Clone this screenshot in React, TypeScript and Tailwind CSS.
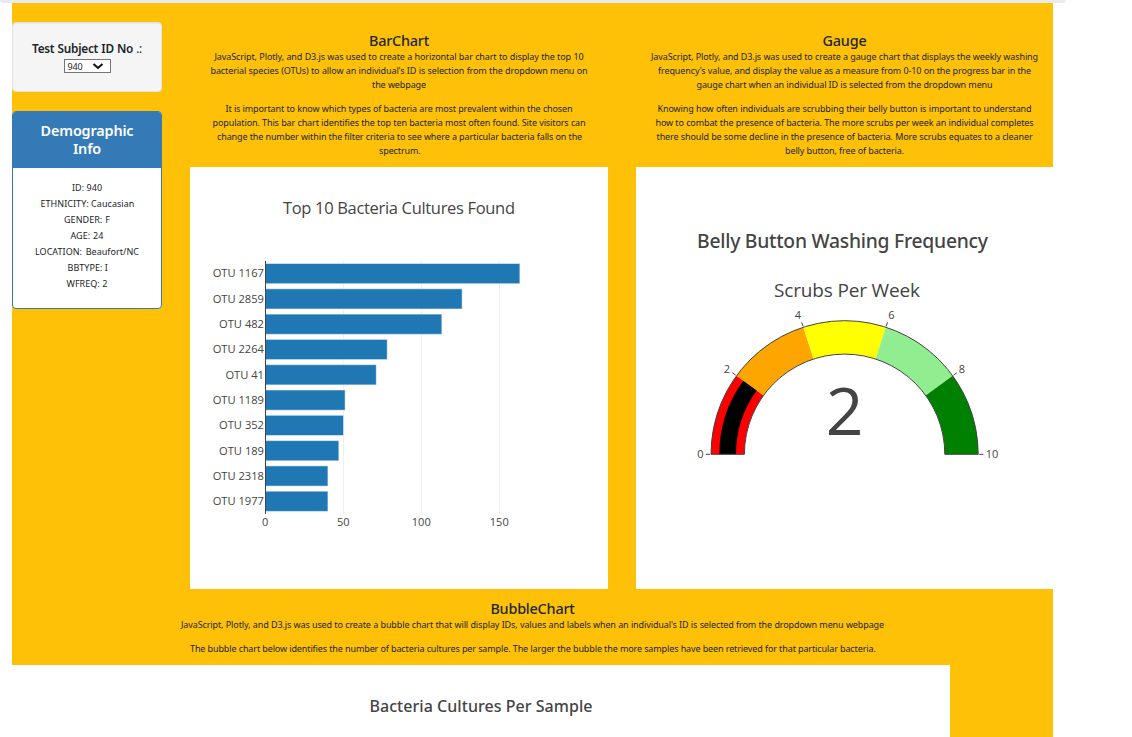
import React from "react";

const samples = [
  { otu: "OTU 1167", value: 163 },
  { otu: "OTU 2859", value: 126 },
  { otu: "OTU 482", value: 113 },
  { otu: "OTU 2264", value: 78 },
  { otu: "OTU 41", value: 71 },
  { otu: "OTU 1189", value: 51 },
  { otu: "OTU 352", value: 50 },
  { otu: "OTU 189", value: 47 },
  { otu: "OTU 2318", value: 40 },
  { otu: "OTU 1977", value: 40 },
];

const demographics = [
  { text: "ID: 940", width: 30 },
  { text: "ETHNICITY: Caucasian", width: 93 },
  { text: "GENDER: F", width: 46 },
  { text: "AGE: 24", width: 33 },
  { text: "LOCATION: Beaufort/NC", width: 104 },
  { text: "BBTYPE: I", width: 39 },
  { text: "WFREQ: 2", width: 41 },
];

type TextLine = { text: string; width: number };

function Lines({ lines }: { lines: TextLine[] }) {
  return (
    <div className="flex flex-col items-center text-[9px] leading-[14px] tracking-[-0.11px]">
      {lines.map((l) => (
        <div key={l.text} className="whitespace-nowrap [text-align-last:justify]" style={{ width: l.width }}>
          {l.text}
        </div>
      ))}
    </div>
  );
}

function Intro({ title, blocks }: { title: string; blocks: TextLine[][] }) {
  return (
    <section className="flex flex-col items-center">
      <h2 className="mb-px text-[14.4px] font-medium leading-[17px] tracking-[-0.2px]">{title}</h2>
      <div className="flex flex-col gap-[10px]">
        {blocks.map((b, i) => (
          <Lines key={i} lines={b} />
        ))}
      </div>
    </section>
  );
}

function BarChart() {
  const x0 = 75.5;
  const scale = 1.5605;
  return (
    <svg width="418" height="422" className="block bg-white font-['Open_Sans','Noto_Sans',sans-serif]" fill="#444">
      <text x="209" y="47" fontSize="16.5" textAnchor="middle" textLength="232">Top 10 Bacteria Cultures Found</text>
      {[50, 100, 150].map((v) => (
        <line key={v} x1={Math.round(x0 + v * scale) - 0.5} x2={Math.round(x0 + v * scale) - 0.5} y1="94" y2="347" stroke="#eee" />
      ))}
      {samples.map((s, i) => (
        <g key={s.otu}>
          <rect x={x0} y={96.5 + i * 25.3} width={s.value * scale} height="20.2" fill="#1f77b4" stroke="#fff" strokeOpacity="0.5" />
          <text x="74" y={110.4 + i * 25.3} fontSize="11.15" textAnchor="end">{s.otu}</text>
        </g>
      ))}
      <line x1={x0} x2={x0} y1="94" y2="347" stroke="#444" />
      {[0, 50, 100, 150].map((v) => (
        <text key={v} x={x0 + v * scale - 0.3} y="359" fontSize="11" textAnchor="middle">{v}</text>
      ))}
    </svg>
  );
}

const CX = 208.6;
const CY = 287.3;

function polar(v: number, r: number) {
  const a = Math.PI * (1 - v / 10);
  return [CX + r * Math.cos(a), CY - r * Math.sin(a)];
}

function ring(from: number, to: number, inner: number, outer: number) {
  const [ax, ay] = polar(from, outer);
  const [bx, by] = polar(to, outer);
  const [cx, cy] = polar(to, inner);
  const [dx, dy] = polar(from, inner);
  return `M${ax},${ay}A${outer},${outer} 0 0 1 ${bx},${by}L${cx},${cy}A${inner},${inner} 0 0 0 ${dx},${dy}Z`;
}

function Gauge() {
  const colors = ["red", "orange", "yellow", "lightgreen", "green"];
  const ticks = [
    { v: 0, x: 64.5, y: 291 },
    { v: 2, x: 91, y: 206 },
    { v: 4, x: 162, y: 152 },
    { v: 6, x: 255.5, y: 152 },
    { v: 8, x: 326, y: 206 },
    { v: 10, x: 356, y: 291 },
  ];
  return (
    <svg width="417" height="422" className="block bg-white font-['Open_Sans','Noto_Sans',sans-serif]" fill="#444">
      <text x="206.5" y="81" className="font-['Noto_Sans',sans-serif]" fontSize="19.3" fontWeight="500" textAnchor="middle" textLength="291">Belly Button Washing Frequency</text>
      <text x="211" y="130" fontSize="19" textAnchor="middle" textLength="146">Scrubs Per Week</text>
      {colors.map((c, i) => (
        <path key={c} d={ring(i * 2, i * 2 + 2, 100.2, 133.6)} fill={c} />
      ))}
      <path d={ring(0, 2, 108.6, 125.3)} fill="#000" />
      <path d={ring(0, 10, 100.2, 133.6)} fill="none" stroke="#444" />
      {ticks.map((t) => {
        const [x1, y1] = polar(t.v, 134.6);
        const [x2, y2] = polar(t.v, 138.8);
        return (
          <g key={t.v}>
            <line x1={x1} y1={y1} x2={x2} y2={y2} stroke="#444" />
            <text x={t.x} y={t.y} fontSize="11" textAnchor="middle">{t.v}</text>
          </g>
        );
      })}
      <text x="208.6" y="268" fontSize="66" textAnchor="middle">2</text>
    </svg>
  );
}

export default function App() {
  return (
    <div className="flex h-[737px] w-[1132px] flex-col overflow-hidden bg-white font-['Noto_Sans','Open_Sans',sans-serif] text-[#212529]">
      <div className="h-[3px] w-[1066px] shrink-0 rounded-b-[4px] bg-[#e9ecef]" />
      <main className="ml-3 flex h-[734px] w-[1041px] flex-col bg-[#ffc107]">
        <div className="flex h-[586px] shrink-0">
          <aside className="w-[150px] shrink-0 pt-[19px]">
            <div className="flex h-[70px] flex-col items-center rounded-[4px] border border-[#e3e3e3] bg-[#f5f5f5] pt-[17px] shadow-[inset_0_1px_1px_rgba(0,0,0,0.05)]">
              <div className="w-[110px] whitespace-nowrap text-[11.8px] font-semibold leading-[17px] tracking-[-0.25px] [text-align-last:justify]">
                Test Subject ID No <span className="font-normal">.:</span>
              </div>
              <button className="mt-[2px] flex h-[14px] w-[47px] items-center justify-between border border-[#767676] bg-white pl-[3px] pr-[6px] text-[9px] leading-none tracking-[-0.1px]">
                940
                <svg width="12" height="8" viewBox="0 0 12 8" fill="none" stroke="#111" strokeWidth="2">
                  <path d="M1.5 2L6 6L10.5 2" />
                </svg>
              </button>
            </div>
            <div className="mt-[19px] h-[198px] overflow-hidden rounded-[4px] border border-[#337ab7] bg-white">
              <h3 className="h-[56px] bg-[#337ab7] pt-[10px] text-center text-[14.4px] font-semibold leading-[18px] tracking-[-0.15px] text-white">
                Demographic
                <br />
                Info
              </h3>
              <div className="flex flex-col items-center pt-[12px] text-[9px] leading-[16px] tracking-[0.04px]">
                {demographics.map((d) => (
                  <div key={d.text} className="whitespace-nowrap [text-align-last:justify]" style={{ width: d.width }}>
                    {d.text}
                  </div>
                ))}
              </div>
            </div>
          </aside>
          <div className="ml-7 flex w-[418px] flex-col justify-between pt-[29px]">
            <Intro
              title="BarChart"
              blocks={[
                [
                  { text: "JavaScript, Plotly, and D3.js was used to create a horizontal bar chart to display the top 10", width: 369 },
                  { text: "bacterial species (OTUs) to allow an individual's ID is selection from the dropdown menu on", width: 377 },
                  { text: "the webpage", width: 54 },
                ],
                [
                  { text: "It is important to know which types of bacteria are most prevalent within the chosen", width: 347 },
                  { text: "population. This bar chart identifies the top ten bacteria most often found. Site visitors can", width: 373 },
                  { text: "change the number within the filter criteria to see where a particular bacteria falls on the", width: 364 },
                  { text: "spectrum.", width: 40 },
                ],
              ]}
            />
            <BarChart />
          </div>
          <div className="ml-7 flex w-[417px] flex-col justify-between pt-[29px]">
            <Intro
              title="Gauge"
              blocks={[
                [
                  { text: "JavaScript, Plotly, and D3.js was used to create a gauge chart that displays the weekly washing", width: 387 },
                  { text: "frequency's value, and display the value as a measure from 0-10 on the progress bar in the", width: 373 },
                  { text: "gauge chart when an individual ID is selected from the dropdown menu", width: 296 },
                ],
                [
                  { text: "Knowing how often individuals are scrubbing their belly button is important to understand", width: 374 },
                  { text: "how to combat the presence of bacteria. The more scrubs per week an individual completes", width: 378 },
                  { text: "there should be some decline in the presence of bacteria. More scrubs equates to a cleaner", width: 376 },
                  { text: "belly button, free of bacteria.", width: 119 },
                ],
              ]}
            />
            <Gauge />
          </div>
        </div>
        <div className="h-[76px] shrink-0 pt-[11px]">
          <Intro
            title="BubbleChart"
            blocks={[
              [{ text: "JavaScript, Plotly, and D3.js was used to create a bubble chart that will display IDs, values and labels when an individual's ID is selected from the dropdown menu webpage", width: 703 }],
              [{ text: "The bubble chart below identifies the number of bacteria cultures per sample. The larger the bubble the more samples have been retrieved for that particular bacteria.", width: 685 }],
            ]}
          />
        </div>
        <div className="h-[72px] w-[938px] shrink-0 bg-white">
          <svg width="938" height="72" className="block font-['Noto_Sans','Open_Sans',sans-serif]" fill="#444">
            <text x="469" y="47" fontSize="16" fontWeight="500" textAnchor="middle" textLength="223">Bacteria Cultures Per Sample</text>
          </svg>
        </div>
      </main>
    </div>
  );
}
